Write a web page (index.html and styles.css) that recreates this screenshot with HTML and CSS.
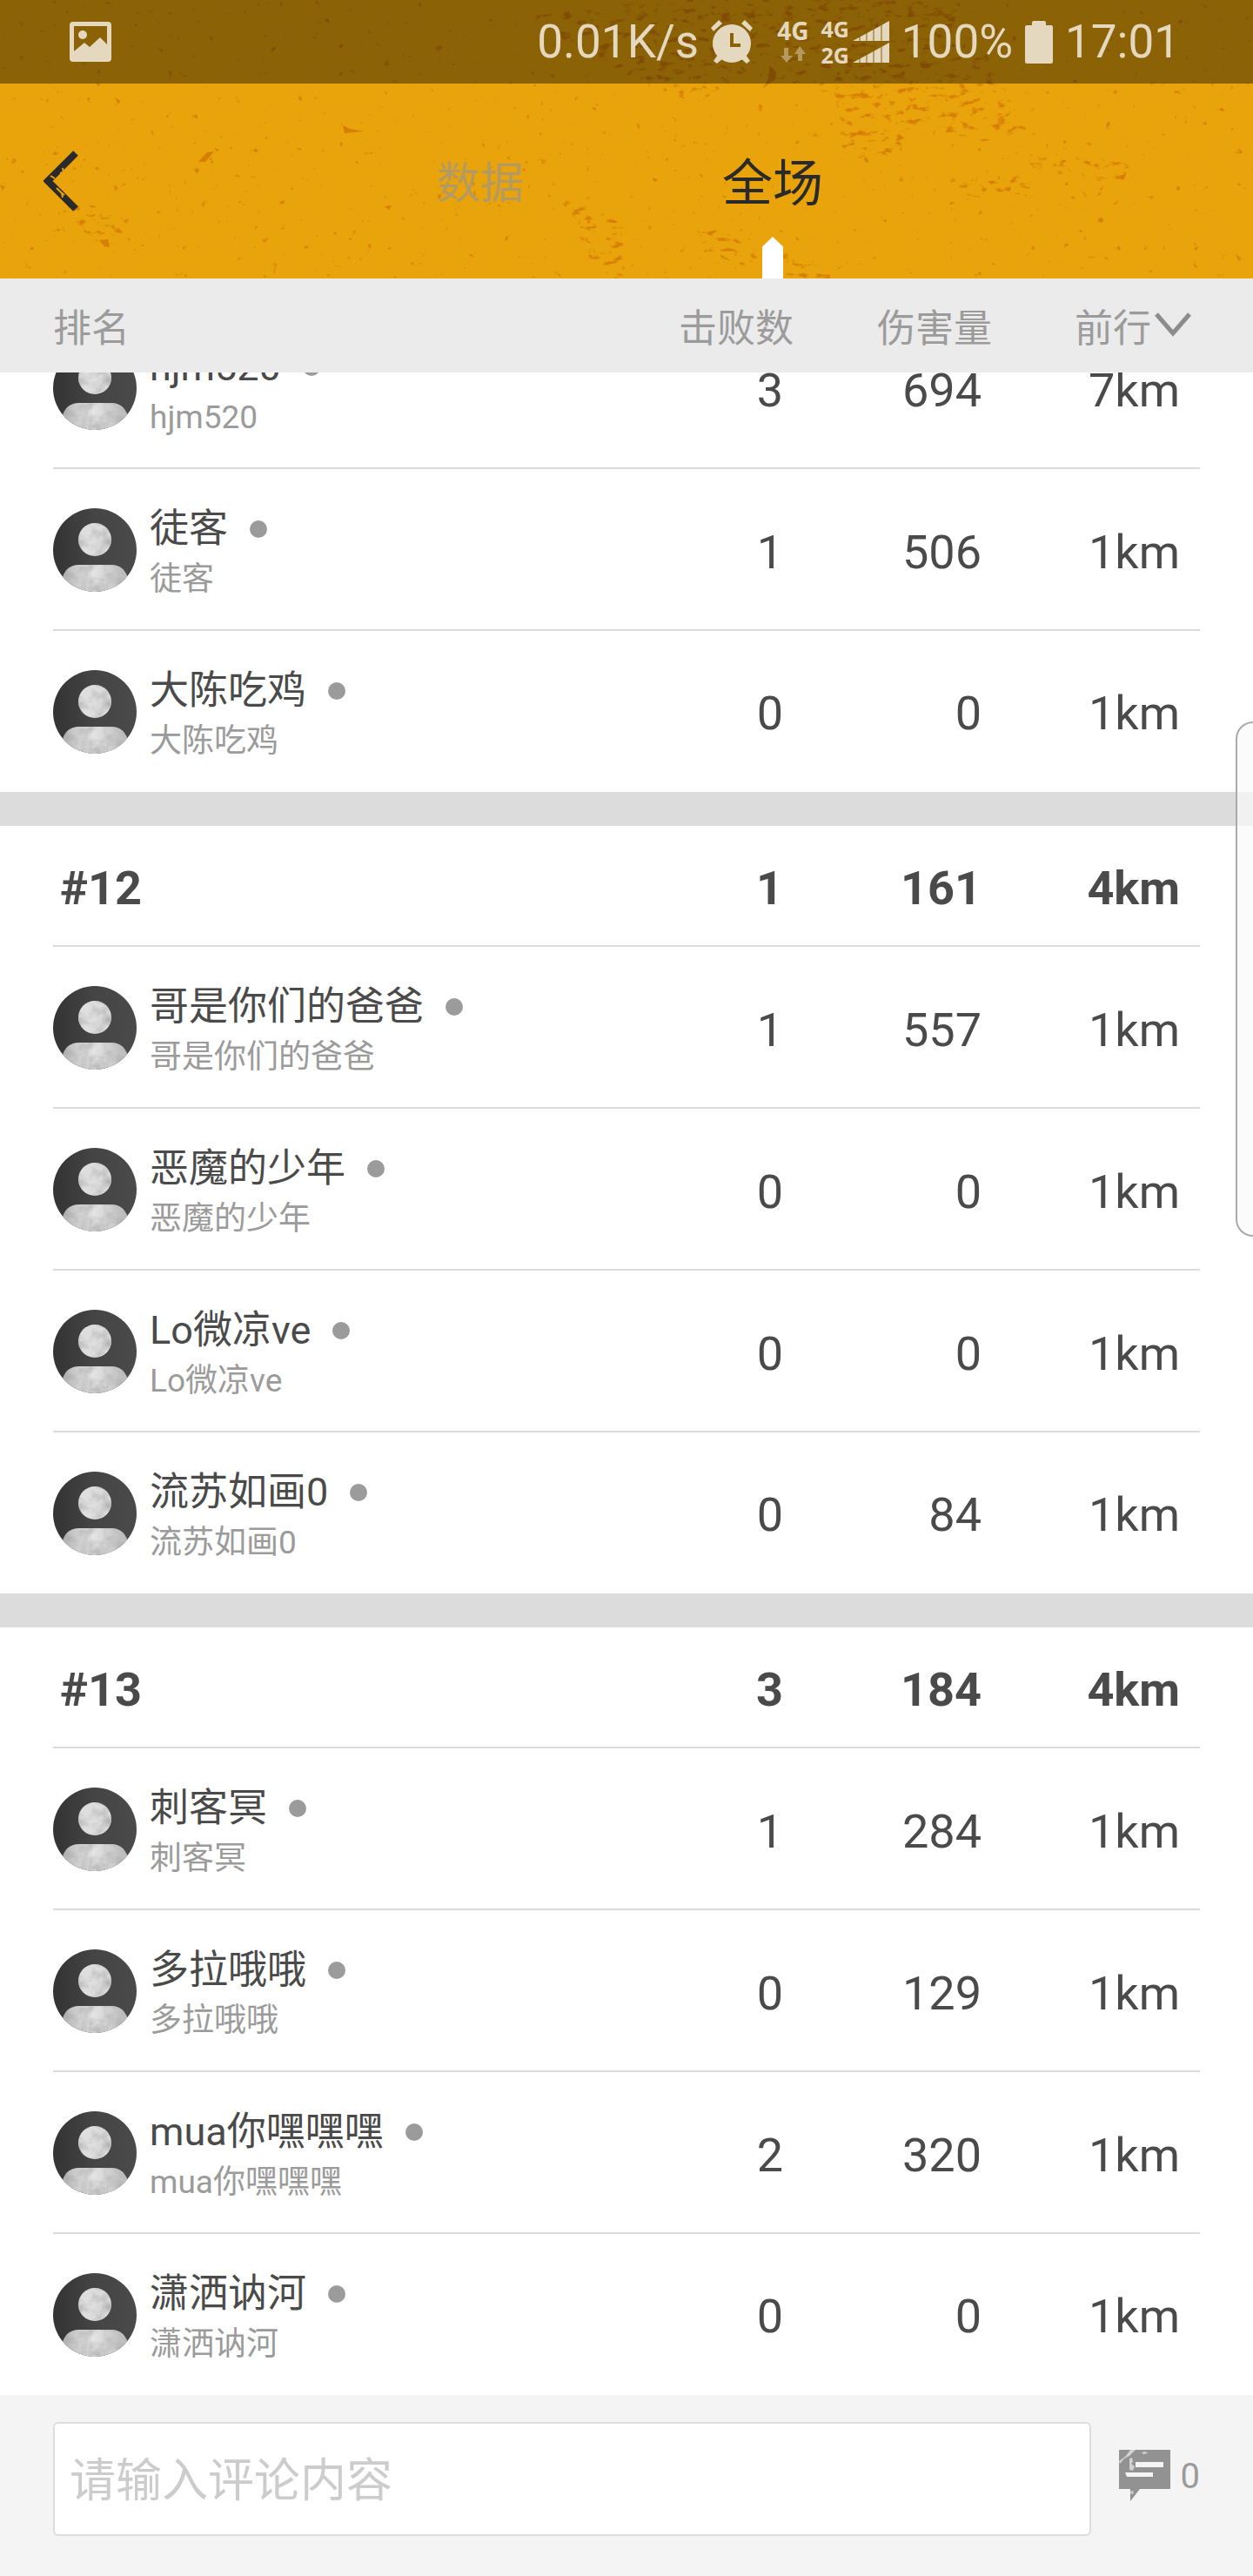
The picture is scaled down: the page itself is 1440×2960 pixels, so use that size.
FILE: index.html
```html
<!DOCTYPE html>
<html lang="zh-CN">
<head>
  <meta charset="utf-8">
  <meta name="viewport" content="width=device-width, initial-scale=1">
  <title>全场</title>
  <link rel="stylesheet" href="styles.css">
</head>
<body>
  <!-- Shared icons -->
  <svg class="defs" width="0" height="0" aria-hidden="true">
    <defs>
      <filter id="grain" x="0" y="0" width="100%" height="100%">
        <feTurbulence type="fractalNoise" baseFrequency="0.06" numOctaves="4" seed="8"/>
        <feColorMatrix values="0 0 0 0 0.35  0 0 0 0 0.35  0 0 0 0 0.35  1.6 0 0 0 -0.62"/>
        <feComposite in2="SourceGraphic" operator="in" result="spots"/>
        <feMerge>
          <feMergeNode in="SourceGraphic"/>
          <feMergeNode in="spots"/>
        </feMerge>
      </filter>
      <linearGradient id="body-light">
        <stop offset="0" stop-color="#b4b4b4"/>
        <stop offset="0.45" stop-color="#e6e6e6"/>
        <stop offset="1" stop-color="#b8b8b8"/>
      </linearGradient>
      <linearGradient id="avatar-dark">
        <stop offset="0" stop-color="#333"/>
        <stop offset="0.5" stop-color="#454545"/>
        <stop offset="1" stop-color="#4a4a4a"/>
      </linearGradient>
      <clipPath id="avatar-clip"><circle cx="48" cy="48" r="48"/></clipPath>
      <symbol id="avatar" viewBox="0 0 96 96">
        <g clip-path="url(#avatar-clip)">
          <rect width="96" height="96" fill="url(#avatar-dark)"/>
          <g filter="url(#grain)">
            <circle cx="48" cy="36" r="19" fill="#dedede"/>
            <path d="M10 96V84Q13 65 30 65H67Q83 65 87 84V96Z" fill="url(#body-light)"/>
          </g>
        </g>
      </symbol>
    </defs>
  </svg>

  <div class="top">
    <svg class="texture" width="100%" height="100%" aria-hidden="true">
      <defs>
        <filter id="specks" x="0" y="0" width="100%" height="100%" color-interpolation-filters="sRGB">
          <feTurbulence type="fractalNoise" baseFrequency="0.1" numOctaves="3" seed="21"/>
          <feColorMatrix values="0 0 0 0 0.84  0 0 0 0 0.49  0 0 0 0 0.02  7 0 0 0 -5.1"/>
        </filter>
        <filter id="scratches" x="0" y="0" width="100%" height="100%" color-interpolation-filters="sRGB">
          <feTurbulence type="fractalNoise" baseFrequency="0.07 0.14" numOctaves="5" seed="5"/>
          <feColorMatrix values="0 0 0 0 0.84  0 0 0 0 0.49  0 0 0 0 0.02  6 0 0 0 -3.5"/>
          <feComposite in2="SourceGraphic" operator="in"/>
        </filter>
      </defs>
      <rect width="100%" height="100%" filter="url(#specks)"/>
      <g filter="url(#scratches)">
        <path d="M600 20L760 0H1100L1180 150L1120 165L1060 140L1010 190L970 180L960 110L860 80L800 120L690 70Z"/>
        <path d="M1180 180L1300 185L1290 210L1190 200ZM1090 205L1190 200L1180 225L1110 230Z"/>
        <path d="M640 220L720 260V320H690ZM800 260L850 270L980 320H900L810 290ZM70 225L150 250L130 290L60 240Z"/>
      </g>
      <g fill="#d67e05">
        <path d="M228 186L238 175L246 174L236 186ZM246 170L252 172L249 174ZM394 144L402 148L418 151L396 153ZM114 276L124 275L126 284L120 283ZM442 237L450 236L447 241ZM132 112L138 116L136 120Z"/>
        <path d="M884 76Q896 82 890 92L876 102Q886 90 884 76Z"/>
      </g>
    </svg>

    <div class="status-bar">
      <svg class="status-picture" width="48" height="46" viewBox="0 0 48 46">
        <path fill="#e4d8bf" fill-rule="evenodd" d="M4 0H44Q48 0 48 4V42Q48 46 44 46H4Q0 46 0 42V4Q0 0 4 0ZM5 5V34L17 24L23 29L35 18L43 26V5Z"/>
        <circle cx="15" cy="15" r="5" fill="#e4d8bf"/>
      </svg>
      <span class="speed">0.01K/s</span>
      <svg width="48" height="50" viewBox="0 0 48 50">
        <g fill="#e4d8bf">
          <circle cx="24" cy="27" r="22"/>
          <path d="M0 9L9 0L13 4L3 13ZM48 9L39 0L35 4L45 13ZM8 40L14 44L7 50L3 47ZM40 40L34 44L41 50L45 47Z"/>
        </g>
        <path d="M24 15V29H34" fill="none" stroke="#8c6207" stroke-width="4"/>
      </svg>
      <span class="network">4G
        <svg width="32" height="20" viewBox="0 0 32 20">
          <path d="M6 2H11V11H16L9 19L2 11H6ZM22 17H27V9H31L24 0L18 9H22Z" fill="#b59a60"/>
        </svg>
      </span>
      <span class="network sim">
        <span>4G</span>
        <span>2G</span>
      </span>
      <svg class="signal" width="42" height="49" viewBox="0 0 42 49">
        <path d="M0 23L42 0V23ZM0 48L42 25V48Z" fill="#e4d8bf"/>
        <path d="M8 12V49M16 8V49M24 3V49M33 0V49" stroke="#8c6207" stroke-width="1"/>
      </svg>
      <span>100%</span>
      <svg width="32" height="49" viewBox="0 0 32 49">
        <path d="M8 2Q8 0 10 0H22Q24 0 24 2V5H30Q32 5 32 7V47Q32 49 30 49H2Q0 49 0 47V7Q0 5 2 5H8Z" fill="#e4d8bf"/>
      </svg>
      <span>17:01</span>
    </div>

    <header class="app-header">
      <button class="back" aria-label="返回">
        <svg width="40" height="70" viewBox="0 0 40 70">
          <path d="M37 3L5 35L37 67" fill="none" stroke="#2a2a2a" stroke-width="8"/>
          <path d="M8 29L13 32M22 20L23 25L19 26M15 43L21 49L22 54M20 48L24 51" fill="none" stroke="#e9a30b" stroke-width="2"/>
        </svg>
      </button>
      <nav class="tabs">
        <a class="tab" href="#data">数据</a>
        <a class="tab active" href="#all">全场</a>
      </nav>
    </header>
  </div>

  <main class="board" id="board">
    <table class="ranking">
      <colgroup>
        <col>
        <col class="col-stat">
        <col class="col-stat">
        <col class="col-last">
      </colgroup>
      <thead>
        <tr>
          <th scope="col">排名</th>
          <th scope="col">击败数</th>
          <th scope="col">伤害量</th>
          <th scope="col">
            <button class="sort">前行<svg width="42" height="34" viewBox="0 0 42 34"><path d="M2 4L21 26L40 4" fill="none" stroke="#8c8c8c" stroke-width="5"/></svg></button>
          </th>
        </tr>
      </thead>
      <tbody>
        <tr class="player">
          <td><div class="user"><svg class="avatar"><use href="#avatar"/></svg><div class="info"><div class="name">hjm520</div><div class="nick">hjm520</div></div></div></td>
          <td>3</td><td>694</td><td>7km</td>
        </tr>
        <tr class="player">
          <td><div class="user"><svg class="avatar"><use href="#avatar"/></svg><div class="info"><div class="name">徒客</div><div class="nick">徒客</div></div></div></td>
          <td>1</td><td>506</td><td>1km</td>
        </tr>
        <tr class="player">
          <td><div class="user"><svg class="avatar"><use href="#avatar"/></svg><div class="info"><div class="name">大陈吃鸡</div><div class="nick">大陈吃鸡</div></div></div></td>
          <td>0</td><td>0</td><td>1km</td>
        </tr>
      </tbody>
      <tbody>
        <tr class="gap"><td colspan="4"></td></tr>
        <tr class="team">
          <th scope="row">#12</th>
          <td>1</td><td>161</td><td>4km</td>
        </tr>
        <tr class="player">
          <td><div class="user"><svg class="avatar"><use href="#avatar"/></svg><div class="info"><div class="name">哥是你们的爸爸</div><div class="nick">哥是你们的爸爸</div></div></div></td>
          <td>1</td><td>557</td><td>1km</td>
        </tr>
        <tr class="player">
          <td><div class="user"><svg class="avatar"><use href="#avatar"/></svg><div class="info"><div class="name">恶魔的少年</div><div class="nick">恶魔的少年</div></div></div></td>
          <td>0</td><td>0</td><td>1km</td>
        </tr>
        <tr class="player">
          <td><div class="user"><svg class="avatar"><use href="#avatar"/></svg><div class="info"><div class="name">Lo微凉ve</div><div class="nick">Lo微凉ve</div></div></div></td>
          <td>0</td><td>0</td><td>1km</td>
        </tr>
        <tr class="player">
          <td><div class="user"><svg class="avatar"><use href="#avatar"/></svg><div class="info"><div class="name">流苏如画0</div><div class="nick">流苏如画0</div></div></div></td>
          <td>0</td><td>84</td><td>1km</td>
        </tr>
      </tbody>
      <tbody>
        <tr class="gap"><td colspan="4"></td></tr>
        <tr class="team">
          <th scope="row">#13</th>
          <td>3</td><td>184</td><td>4km</td>
        </tr>
        <tr class="player">
          <td><div class="user"><svg class="avatar"><use href="#avatar"/></svg><div class="info"><div class="name">刺客冥</div><div class="nick">刺客冥</div></div></div></td>
          <td>1</td><td>284</td><td>1km</td>
        </tr>
        <tr class="player">
          <td><div class="user"><svg class="avatar"><use href="#avatar"/></svg><div class="info"><div class="name">多拉哦哦</div><div class="nick">多拉哦哦</div></div></div></td>
          <td>0</td><td>129</td><td>1km</td>
        </tr>
        <tr class="player">
          <td><div class="user"><svg class="avatar"><use href="#avatar"/></svg><div class="info"><div class="name">mua你嘿嘿嘿</div><div class="nick">mua你嘿嘿嘿</div></div></div></td>
          <td>2</td><td>320</td><td>1km</td>
        </tr>
        <tr class="player">
          <td><div class="user"><svg class="avatar"><use href="#avatar"/></svg><div class="info"><div class="name">潇洒讷河</div><div class="nick">潇洒讷河</div></div></div></td>
          <td>0</td><td>0</td><td>1km</td>
        </tr>
      </tbody>
    </table>
  </main>

  <footer class="comment-bar">
    <input type="text" class="comment-input" placeholder="请输入评论内容" aria-label="请输入评论内容">
    <button class="comment-count">
      <svg width="60" height="60" viewBox="0 0 60 60">
        <path d="M0 0H59V45H24L13 59V45H0Z" fill="#929292"/>
        <path d="M19 14H51V20H19ZM7 26H39V31H9Z" fill="#f4f4f4"/>
        <path d="M0 13L8 7L13 0H19L12 7L6 10L1 16ZM26 3L30 2L33 4L28 5ZM12 10L15 9L16 14L14 16L18 19L16 24L12 23Z" fill="#d2d2d2"/>
        <circle cx="15" cy="49" r="2" fill="#c8c8c8"/>
      </svg>
      <span>0</span>
    </button>
  </footer>

  <div class="edge-handle"></div>

  <script>
    // Open at the end of the list
    const board = document.getElementById('board');
    board.scrollTop = board.scrollHeight;
  </script>
</body>
</html>
```
FILE: styles.css
```css
:root {
  --orange: #e9a30b;
  --text: #4a4a4a;
  --muted: #9b9b9b;
  --line: #dcdcdc;
  --status: #e4d8bf;
  --side: 61px;
}

* {
  box-sizing: border-box;
  margin: 0;
  padding: 0;
}

body {
  display: flex;
  flex-direction: column;
  height: 100vh;
  overflow: hidden;
  font-family: Roboto, "Noto Sans CJK SC", sans-serif;
  color: var(--text);
  background-color: #fff;
}

button {
  border: none;
  background: none;
  font: inherit;
  color: inherit;
  cursor: pointer;
}

svg {
  display: block;
  flex: none;
}

.defs {
  position: absolute;
}

/* Top */
.top {
  position: relative;
  flex: none;
  background-color: var(--orange);
}

.texture {
  position: absolute;
  inset: 0;
}

.status-bar {
  position: relative;
  display: flex;
  align-items: center;
  height: 96px;
  padding: 0 84px 0 80px;
  gap: 14px;
  background-color: rgba(0, 0, 0, 0.4);
  color: var(--status);
  font-size: 53px;
  line-height: 96px;
}

.speed {
  margin-left: auto;
}

.network {
  display: flex;
  flex-direction: column;
  align-items: center;
  margin-left: 14px;
  gap: 6px;
  font: bold 28px/24px "Open Sans", sans-serif;
}

.network.sim {
  margin-left: 0;
  margin-right: -10px;
  font-size: 25px;
}

/* Header */
.app-header {
  position: relative;
  display: grid;
  grid-template-columns: 1fr 672px 1fr;
  height: 224px;
}

.back {
  justify-self: start;
  padding: 0 50px;
}

.tabs {
  display: flex;
  height: 224px;
}

.tab {
  position: relative;
  flex: 1;
  text-align: center;
  font-size: 50px;
  line-height: 230px;
  color: #b29a62;
  text-decoration: none;
}

.tab.active {
  font-size: 58px;
  color: #2a2a2a;
}

.tab.active::after {
  content: "";
  position: absolute;
  left: calc(50% - 12px);
  bottom: 0;
  width: 24px;
  height: 48px;
  background-color: #fff;
  clip-path: polygon(50% 0, 100% 24%, 100% 100%, 0 100%, 0 24%);
}

/* Ranking */
.board {
  flex: 1;
  min-height: 0;
  overflow-y: auto;
  scrollbar-width: none;
}

.ranking {
  width: 100%;
  table-layout: fixed;
  border-collapse: collapse;
}

.col-stat {
  width: 228px;
}

.col-last {
  width: 300px;
}

.ranking thead th {
  position: sticky;
  top: 0;
  z-index: 1;
  height: 108px;
  background-color: #ebebeb;
  color: var(--muted);
  font-size: 44px;
  font-weight: normal;
  text-align: right;
}

.ranking thead th:last-child {
  padding-right: 71px;
}

.sort {
  display: inline-flex;
  align-items: center;
  gap: 4px;
}

.player,
.team {
  height: 186px;
  font-size: 54px;
  background: linear-gradient(var(--line), var(--line)) center bottom / calc(100% - 122px) 2px no-repeat;
}

.player:last-child {
  height: 185px;
  background: none;
}

.team {
  height: 139px;
  font-weight: bold;
}

.ranking td {
  padding-top: 4px;
  padding-right: 12px;
  text-align: right;
}

.ranking td:last-child {
  padding-right: 84px;
}

.ranking tr > :first-child {
  padding-top: 0;
  padding-left: var(--side);
  text-align: left;
}

.ranking .team th {
  padding-top: 4px;
  padding-left: 69px;
}

.ranking .gap td {
  height: 39px;
  padding: 0;
  background-color: var(--line);
}

.user {
  display: flex;
  align-items: center;
  gap: 15px;
  white-space: nowrap;
}

.avatar {
  width: 96px;
  height: 96px;
}

.info {
  padding-top: 8px;
}

.name {
  display: flex;
  align-items: center;
  gap: 25px;
  font-size: 45px;
  line-height: 60px;
}

/* Offline dot */
.name::after {
  content: "";
  width: 20px;
  height: 20px;
  border-radius: 50%;
  background-color: var(--muted);
}

.nick {
  font-size: 37px;
  line-height: 56px;
  color: var(--muted);
}

/* Comment bar */
.comment-bar {
  flex: none;
  display: flex;
  align-items: flex-start;
  gap: 32px;
  padding: 31px var(--side) 46px;
  background-color: #f4f4f4;
}

.comment-input {
  flex: 1;
  min-width: 0;
  height: 131px;
  padding: 4px 17px 0;
  border: 2px solid #ddd;
  border-radius: 6px;
  background-color: #fff;
  font: inherit;
  font-size: 53px;
  color: var(--text);
}

.comment-input::placeholder {
  color: #ccc;
}

.comment-count {
  display: flex;
  align-items: center;
  gap: 11px;
  height: 124px;
  font-size: 40px;
  color: var(--muted);
}

/* Edge panel handle */
.edge-handle {
  position: fixed;
  top: 28%;
  right: 0;
  width: 20px;
  height: 20%;
  border: 2px solid #aaa;
  border-right: none;
  border-radius: 20px 0 0 20px;
  background-color: rgba(250, 250, 250, 0.7);
}
```
